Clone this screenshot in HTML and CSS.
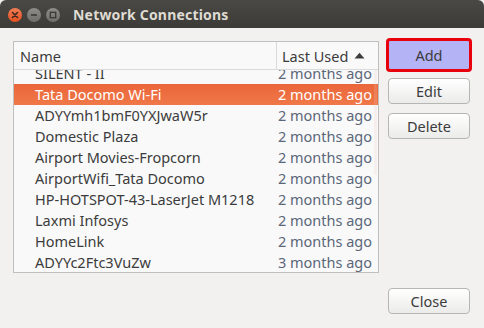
FILE: index.html
```html
<!DOCTYPE html>
<html lang="en">
<head>
    <meta charset="UTF-8">
    <title>Network Connections</title>
    <link rel="stylesheet" href="styles.css">
</head>
<body>
    <div class="window">
        <div class="titlebar">
            <div class="controls">
                <span class="ctl ctl-close">
                    <svg width="14" height="14" viewBox="0 0 14 14"><path d="M4.5 4.5 L9.5 9.5 M9.5 4.5 L4.5 9.5" stroke="#3a2a22" stroke-width="1.6" stroke-linecap="round"/></svg>
                </span>
                <span class="ctl">
                    <svg width="14" height="14" viewBox="0 0 14 14"><path d="M4 7 H10" stroke="#3a3935" stroke-width="1.6"/></svg>
                </span>
                <span class="ctl">
                    <svg width="14" height="14" viewBox="0 0 14 14"><rect x="4.3" y="4.3" width="5.4" height="5.4" fill="none" stroke="#3a3935" stroke-width="1.3"/></svg>
                </span>
            </div>
            <div class="title">Network Connections</div>
        </div>
        <div class="content">
            <div class="list">
                <div class="list-head">
                    <div class="col-name">Name</div>
                    <div class="col-used">Last Used
                        <svg class="sort" width="11" height="7" viewBox="0 0 11 7"><path d="M0.5 6.5 L5.5 0.8 L10.5 6.5 Z" fill="#3c3c3c"/></svg>
                    </div>
                </div>
                <div class="rows">
                    <div class="rows-inner">
                        <div class="row"><span class="name">SILENT - II</span><span class="used">2 months ago</span></div>
                        <div class="row selected"><span class="name">Tata Docomo Wi-Fi</span><span class="used">2 months ago</span></div>
                        <div class="row"><span class="name">ADYYmh1bmF0YXJwaW5r</span><span class="used">2 months ago</span></div>
                        <div class="row"><span class="name">Domestic Plaza</span><span class="used">2 months ago</span></div>
                        <div class="row"><span class="name">Airport Movies-Fropcorn</span><span class="used">2 months ago</span></div>
                        <div class="row"><span class="name">AirportWifi_Tata Docomo</span><span class="used">2 months ago</span></div>
                        <div class="row"><span class="name">HP-HOTSPOT-43-LaserJet M1218</span><span class="used">2 months ago</span></div>
                        <div class="row"><span class="name">Laxmi Infosys</span><span class="used">2 months ago</span></div>
                        <div class="row"><span class="name">HomeLink</span><span class="used">2 months ago</span></div>
                        <div class="row"><span class="name">ADYYc2Ftc3VuZw</span><span class="used">3 months ago</span></div>
                    </div>
                    <div class="scroll-hint"></div>
                </div>
            </div>
            <div class="side">
                <button class="btn btn-add">Add</button>
                <button class="btn btn-edit">Edit</button>
                <button class="btn btn-delete">Delete</button>
                <div class="spacer"></div>
                <button class="btn">Close</button>
            </div>
        </div>
    </div>
</body>
</html>
```

FILE: styles.css
```css
:root {
    --bg: #f2f1f0;
    --text: #3c3c3c;
    --dim: #5b6779;
    --orange: #ee6c3f;
}
body {
    margin: 0;
    background-color: var(--bg);
    font-family: "Noto Sans", "Open Sans", sans-serif;
    color: var(--text);
}
.window {
    width: 484px;
    height: 328px;
    display: flex;
    flex-direction: column;
    overflow: hidden;
}
.titlebar {
    height: 28px;
    flex: 0 0 28px;
    background: linear-gradient(#4a4945, #3c3b37);
    border-radius: 6px 6px 0 0;
    display: flex;
    align-items: center;
}
.controls {
    display: flex;
    gap: 5px;
    padding-left: 8px;
    padding-top: 1px;
}
.ctl {
    width: 14px;
    height: 14px;
    border-radius: 50%;
    background: linear-gradient(#8e8d89, #6f6e6a);
    display: flex;
}
.ctl-close {
    background: linear-gradient(#f37d55, #e5501f);
}
.title {
    margin-left: 13px;
    font-size: 14px;
    font-weight: bold;
    color: #dfdbd2;
    padding-top: 1px;
    letter-spacing: 0.2px;
}
.content {
    flex: 1;
    display: flex;
    gap: 9px;
    padding: 13px 14px 14px 13px;
}
.list {
    width: 366px;
    height: 232px;
    box-sizing: border-box;
    border: 1px solid #bfbfbf;
    background-color: #f9f9f9;
    display: flex;
    flex-direction: column;
    font-size: 14.5px;
}
.list-head {
    height: 27px;
    flex: 0 0 27px;
    display: flex;
    border-bottom: 1px solid #dadada;
}
.col-name {
    width: 263px;
    box-sizing: border-box;
    padding-left: 6px;
    border-right: 1px solid #dadada;
    display: flex;
    align-items: center;
}
.col-used {
    flex: 1;
    padding-left: 5px;
    display: flex;
    align-items: center;
}
.sort {
    margin-left: 6px;
    margin-top: -1px;
}
.rows {
    flex: 1;
    overflow: hidden;
    position: relative;
}
.rows-inner {
    margin-top: -7px;
}
.row {
    height: 21px;
    box-sizing: border-box;
    padding: 0 6px 1px 21px;
    display: flex;
    align-items: center;
    justify-content: space-between;
}
.used {
    color: var(--dim);
}
.row.selected {
    background: linear-gradient(#ea663a, #f07848);
    color: #ffffff;
}
.row.selected .used {
    color: #ffffff;
}
.scroll-hint {
    position: absolute;
    right: 1px;
    top: 0;
    width: 3px;
    height: 105px;
    background-color: rgba(240, 200, 190, 0.2);
}
.side {
    width: 82px;
    display: flex;
    flex-direction: column;
}
.btn {
    height: 26px;
    box-sizing: border-box;
    border: 1px solid #b6b6b3;
    border-radius: 4px;
    background: linear-gradient(#ffffff, #ebebea);
    font-family: "Noto Sans", "Open Sans", sans-serif;
    font-size: 14.5px;
    color: var(--text);
    padding: 0;
}
.btn-add {
    height: 30px;
    margin-top: -1px;
    background: #b3b3f6;
    border-color: #9a9ae0;
    border-radius: 2px;
    outline: 3px solid #e8000b;
    outline-offset: -1px;
}
.btn-edit {
    margin-top: 8px;
}
.btn-delete {
    margin-top: 9px;
}
.spacer {
    flex: 1;
}
```
